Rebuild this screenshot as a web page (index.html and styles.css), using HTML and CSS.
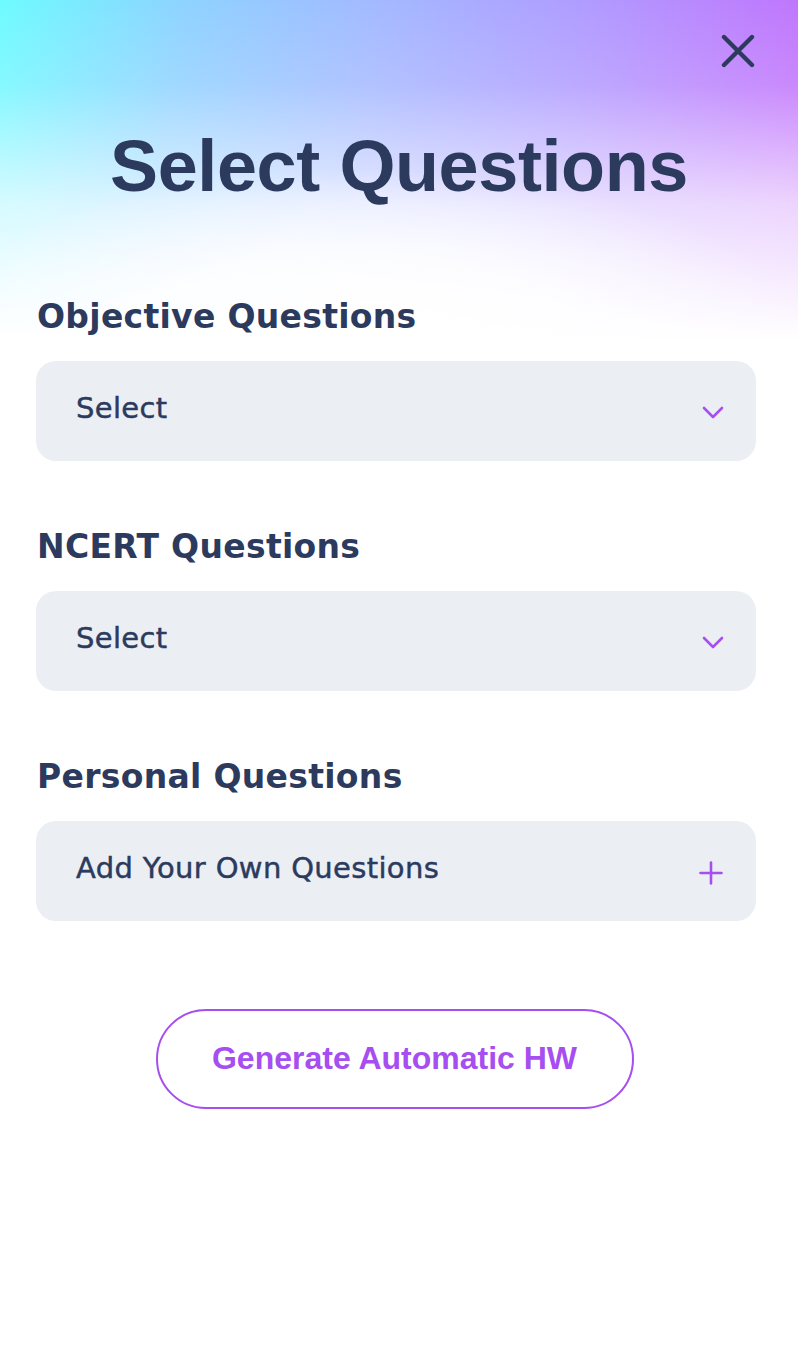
FILE: index.html
```html
<!DOCTYPE html>
<html>
<head>
<meta charset="utf-8">
<link rel="stylesheet" href="styles.css">
</head>
<body>
<div class="page">
  <header class="hero">
    <button class="close" aria-label="Close">
      <svg width="34" height="34" viewBox="0 0 34 34"><path d="M3 3 L31 31 M31 3 L3 31" stroke="#2c3a5e" stroke-width="4.4" stroke-linecap="round" fill="none"/></svg>
    </button>
    <h1 class="title">Select Questions</h1>
  </header>
  <main class="form">
    <section class="field">
      <h2 class="label">Objective Questions</h2>
      <div class="box">
        <span class="box-text">Select</span>
        <svg class="icon" width="24" height="24" viewBox="0 0 24 24"><path d="M3 7 L12 16 L21 7" stroke="#a64ef0" stroke-width="2.6" stroke-linecap="round" stroke-linejoin="round" fill="none"/></svg>
      </div>
    </section>
    <section class="field">
      <h2 class="label">NCERT Questions</h2>
      <div class="box">
        <span class="box-text">Select</span>
        <svg class="icon" width="24" height="24" viewBox="0 0 24 24"><path d="M3 7 L12 16 L21 7" stroke="#a64ef0" stroke-width="2.6" stroke-linecap="round" stroke-linejoin="round" fill="none"/></svg>
      </div>
    </section>
    <section class="field">
      <h2 class="label">Personal Questions</h2>
      <div class="box">
        <span class="box-text">Add Your Own Questions</span>
        <svg class="icon plus" width="26" height="26" viewBox="0 0 26 26"><path d="M13 2.5 V23.5 M2.5 13 H23.5" stroke="#a64ef0" stroke-width="2.6" stroke-linecap="round" fill="none"/></svg>
      </div>
    </section>
    <div class="actions">
      <button class="generate">Generate Automatic HW</button>
    </div>
  </main>
</div>
</body>
</html>
```
FILE: styles.css
```css
* { box-sizing: border-box; }
html, body { margin: 0; padding: 0; background: #fff; }
body { width: 798px; height: 1363px; overflow: hidden; }
.page {
  width: 798px;
  min-height: 1363px;
  background-color: #fff;
  background-image:
    radial-gradient(ellipse 55% 45% at 45% 95%, #fff 0%, rgba(255,255,255,0.8) 45%, rgba(255,255,255,0) 100%),
    linear-gradient(180deg, rgba(255,255,255,0) 0%, rgba(255,255,255,0.15) 25%, rgba(255,255,255,0.7) 60%, #fff 100%),
    linear-gradient(100deg, #6efbff 0%, #8fd2ff 22%, #a4b8ff 45%, #b09cff 68%, #c46cfc 100%);
  background-size: 100% 340px;
  background-repeat: no-repeat;
}
.hero {
  position: relative;
  height: 290px;
  padding-top: 128px;
}
.close {
  position: absolute;
  top: 34px;
  right: 43px;
  padding: 0;
  border: 0;
  background: none;
  width: 34px;
  height: 34px;
}
.close svg { display: block; }
.title {
  margin: 0;
  text-align: center;
  font-family: "Liberation Sans", Arial, sans-serif;
  font-weight: 700;
  font-size: 72px;
  line-height: 76px;
  color: #2c3a5e;
  letter-spacing: -0.4px;
}
.form { padding: 0 42px 0 36px; }
.field { display: flex; flex-direction: column; }
.field + .field { margin-top: 60px; }
.label {
  margin: 5px 0 22px 1px;
  font-family: "DejaVu Sans", sans-serif;
  font-weight: 700;
  font-size: 33px;
  line-height: 44px;
  color: #2c3a5e;
  letter-spacing: 0.3px;
}
.field + .field .label { margin-top: 4px; }
.box {
  height: 100px;
  border-radius: 20px;
  background: #ebeff4;
  display: flex;
  align-items: center;
  justify-content: space-between;
  padding: 0 31px 0 40px;
}
.box-text {
  font-family: "DejaVu Sans", sans-serif;
  font-weight: 400;
  font-size: 29px;
  letter-spacing: 0.35px;
  color: #2c3a5e;
  -webkit-text-stroke: 0.45px #2c3a5e;
  margin-top: -6px;
}
.icon { display: block; margin-top: 4px; }
.plus { margin-top: 4px; margin-right: 1px; }
.actions { display: flex; justify-content: center; padding-top: 88px; padding-right: 3px; }
.generate {
  width: 478px;
  height: 100px;
  border: 2px solid #a64ef0;
  border-radius: 50px;
  background: #fff;
  color: #a64ef0;
  font-family: "Liberation Sans", Arial, sans-serif;
  font-weight: 700;
  font-size: 32px;
  padding: 0 0 2px 0;
}
```
